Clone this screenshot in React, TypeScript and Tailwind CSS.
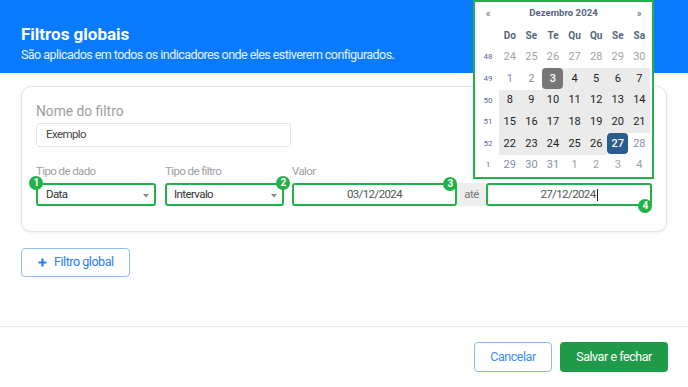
import React from 'react';

type Cell = { d: number; t: 'nov' | 'out' | 'in' | 'start' | 'end' | 'jan' };

const weeks: { w: number; cells: Cell[] }[] = [
  { w: 48, cells: [24, 25, 26, 27, 28, 29, 30].map((d) => ({ d, t: 'nov' as const })) },
  {
    w: 49,
    cells: [
      { d: 1, t: 'out' },
      { d: 2, t: 'out' },
      { d: 3, t: 'start' },
      { d: 4, t: 'in' },
      { d: 5, t: 'in' },
      { d: 6, t: 'in' },
      { d: 7, t: 'in' },
    ],
  },
  { w: 50, cells: [8, 9, 10, 11, 12, 13, 14].map((d) => ({ d, t: 'in' as const })) },
  { w: 51, cells: [15, 16, 17, 18, 19, 20, 21].map((d) => ({ d, t: 'in' as const })) },
  {
    w: 52,
    cells: [
      { d: 22, t: 'in' },
      { d: 23, t: 'in' },
      { d: 24, t: 'in' },
      { d: 25, t: 'in' },
      { d: 26, t: 'in' },
      { d: 27, t: 'end' },
      { d: 28, t: 'out' },
    ],
  },
  {
    w: 1,
    cells: [
      { d: 29, t: 'out' },
      { d: 30, t: 'out' },
      { d: 31, t: 'out' },
      { d: 1, t: 'jan' },
      { d: 2, t: 'jan' },
      { d: 3, t: 'jan' },
      { d: 4, t: 'jan' },
    ],
  },
];

function DayCell({ c }: { c: Cell }) {
  if (c.t === 'start') {
    return (
      <div className="flex h-[21.6px] w-[21.6px] items-center justify-center bg-[#ebebeb]">
        <div className="flex h-[21px] w-[21px] items-center justify-center rounded-[4px] bg-[#767676] text-[11px] font-medium text-white">
          {c.d}
        </div>
      </div>
    );
  }
  if (c.t === 'end') {
    return (
      <div className="flex h-[21.6px] w-[21.6px] items-center justify-center">
        <div className="flex h-[21px] w-[21px] items-center justify-center rounded-[4px] bg-[#2a5c8d] text-[11px] font-medium text-white">
          {c.d}
        </div>
      </div>
    );
  }
  if (c.t === 'in') {
    return (
      <div className="flex h-[21.6px] w-[21.6px] items-center justify-center bg-[#ebebeb] text-[11px] text-[#222222]">
        {c.d}
      </div>
    );
  }
  if (c.t === 'out') {
    return (
      <div className="flex h-[21.6px] w-[21.6px] items-center justify-center text-[11px] text-[#8390ac]">{c.d}</div>
    );
  }
  return (
    <div className="flex h-[21.6px] w-[21.6px] items-center justify-center text-[11px] text-[#a3a3a3]">{c.d}</div>
  );
}

function Calendar() {
  const names = ['Do', 'Se', 'Te', 'Qu', 'Qu', 'Se', 'Sa'];
  return (
    <div className="absolute left-[473px] top-0 h-[179px] w-[181px] border-2 border-[#22b24c] bg-white pl-[2px]">
      <div className="flex h-[23px] items-center justify-between pr-[2px] text-[#56657f]">
        <div className="w-[22px] text-center text-[10px]">«</div>
        <div className="text-[9.6px] font-bold">Dezembro 2024</div>
        <div className="w-[22px] text-center text-[10px]">»</div>
      </div>
      <div className="flex h-[21.6px] items-center">
        <div className="w-[22px]" />
        {names.map((n, i) => (
          <div key={i} className="w-[21.6px] text-center text-[10px] font-bold text-[#56657f]">
            {n}
          </div>
        ))}
      </div>
      {weeks.map((wk) => (
        <div key={wk.w} className="flex h-[21.6px] items-center">
          <div className="w-[22px] text-center text-[8px] text-[#5a6a90]">{wk.w}</div>
          {wk.cells.map((c, i) => (
            <DayCell key={i} c={c} />
          ))}
        </div>
      ))}
    </div>
  );
}

function Badge({ n, className }: { n: number; className: string }) {
  return (
    <span
      className={
        'absolute z-10 flex h-[14px] w-[14px] items-center justify-center rounded-full bg-[#22b24c] text-[10px] font-bold leading-none text-white ' +
        className
      }
    >
      {n}
    </span>
  );
}

function Arrow() {
  return (
    <svg width="6" height="4" viewBox="0 0 6 4" className="absolute right-[5px] top-[9px]">
      <path d="M0 0 L6 0 L3 3.5 Z" fill="#8a8a8a" />
    </svg>
  );
}

export default function App() {
  return (
    <div className="relative flex h-[387px] w-[688px] flex-col overflow-hidden bg-white font-['Roboto',sans-serif]">
      <div className="h-[73px] shrink-0 bg-[#0a7bff] px-[21px] pt-[24px] text-white">
        <div className="text-[17px] font-bold leading-[20px]">Filtros globais</div>
        <div className="mt-[3px] text-[12.5px] leading-[16px] tracking-[-0.55px] text-white/90">
          São aplicados em todos os indicadores onde eles estiverem configurados.
        </div>
      </div>

      <div className="px-[21px] pt-[13px]">
        <div className="rounded-[10px] border border-[#e4e4e4] pb-[25px] pl-[14px] pr-[14px] pt-[16px] shadow-[0_1px_3px_rgba(0,0,0,0.08)]">
          <div className="text-[13.8px] leading-[16px] text-[#9e9e9e]">Nome do filtro</div>
          <div className="mt-[4px] flex h-[24px] w-[255px] items-center rounded-[3px] border border-[#e6e6e6] pl-[9px] text-[11.5px] tracking-[-0.6px] text-[#444444]">
            Exemplo
          </div>

          <div className="mt-[16px] flex gap-[9px]">
            <div className="w-[120px]">
              <div className="text-[11.5px] leading-[16px] tracking-[-0.6px] text-[#a0a0a0]">Tipo de dado</div>
              <div className="relative mt-[4px] flex h-[23px] items-center rounded-[3px] border-2 border-[#22b24c] pl-[8px] text-[11.5px] tracking-[-0.6px] text-[#333333]">
                Data
                <Arrow />
                <Badge n={1} className="left-[-9px] top-[-9px]" />
              </div>
            </div>
            <div className="w-[119px]">
              <div className="text-[11.5px] leading-[16px] tracking-[-0.6px] text-[#a0a0a0]">Tipo de filtro</div>
              <div className="relative mt-[4px] flex h-[23px] items-center rounded-[3px] border-2 border-[#22b24c] pl-[7px] text-[11.5px] tracking-[-0.6px] text-[#333333]">
                Intervalo
                <Arrow />
                <Badge n={2} className="right-[-8px] top-[-9px]" />
              </div>
            </div>
            <div className="ml-[-1px] flex-1">
              <div className="text-[11.5px] leading-[16px] tracking-[-0.6px] text-[#a0a0a0]">Valor</div>
              <div className="mt-[4px] flex h-[23px]">
                <div className="relative flex w-[165px] items-center justify-center rounded-[3px] border-2 border-[#22b24c] text-[11.5px] tracking-[-0.6px] text-[#555555]">
                  03/12/2024
                  <Badge n={3} className="right-[-2px] top-[-8px]" />
                </div>
                <div className="flex w-[29px] items-center justify-center bg-[#eeeeee] text-[11.5px] tracking-[-0.6px] text-[#777777]">até</div>
                <div className="relative flex flex-1 items-center justify-center rounded-[3px] border-2 border-[#22b24c] text-[11.5px] tracking-[-0.6px] text-[#555555]">
                  27/12/2024
                  <span className="ml-[1px] h-[12px] w-px bg-[#222222]" />
                  <Badge n={4} className="bottom-[-9px] right-[-2px]" />
                </div>
              </div>
            </div>
          </div>
        </div>

        <button className="mt-[16px] flex h-[29px] w-[109px] items-center gap-[7px] rounded-[4px] border border-[#8fbdf7] pl-[16px] text-[12.5px] tracking-[-0.45px] text-[#2680f5]">
          <svg width="9" height="9" viewBox="0 0 10 10">
            <path d="M5 0.5 V9.5 M0.5 5 H9.5" stroke="#2680f5" strokeWidth="2.4" />
          </svg>
          Filtro global
        </button>
      </div>

      <div className="mt-auto flex h-[61px] shrink-0 items-center justify-end gap-[8px] border-t border-[#e9e9e9] pr-[20px]">
        <button className="h-[30px] w-[78px] rounded-[4px] border border-[#8ab8f8] text-[12.5px] tracking-[-0.45px] text-[#3a8af7]">Cancelar</button>
        <button className="h-[30px] w-[108px] rounded-[4px] bg-[#1f9a48] text-[12.5px] tracking-[-0.45px] text-white">Salvar e fechar</button>
      </div>

      <Calendar />
    </div>
  );
}
